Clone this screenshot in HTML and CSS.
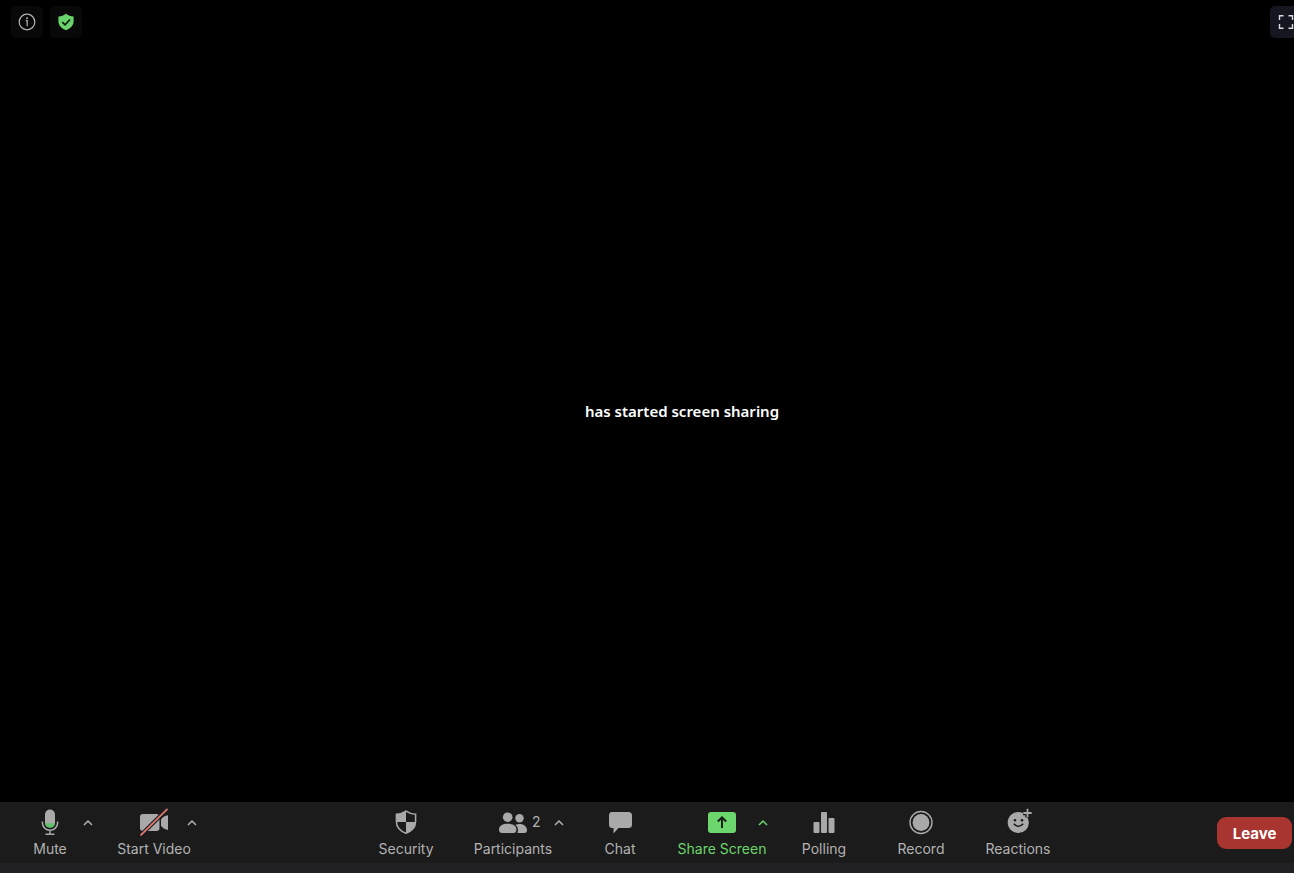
FILE: index.html
```html
<!DOCTYPE html>
<html lang="en">
<head>
<meta charset="utf-8">
<meta name="viewport" content="width=device-width, initial-scale=1">
<title>Meeting</title>
<link rel="stylesheet" href="styles.css">
</head>
<body>
<div class="meeting">
  <header class="topbar">
    <div class="topbar-group">
      <button class="chip" type="button" aria-label="Meeting information">
        <svg width="18" height="18" viewBox="0 0 18 18" fill="none" stroke="#b4b4b4" stroke-width="1.2"><circle cx="9" cy="9" r="7.8"/><path d="M7.800 7.600H9.200V13.200"/><circle cx="9" cy="5.200" r=".4" fill="#b4b4b4"/></svg>
      </button>
      <button class="chip" type="button" aria-label="Encryption">
        <svg width="18" height="18" viewBox="0 0 18 18"><path d="M9 .8C11 2.500 13.600 3.300 16.600 3.500V8.200C16.600 12.600 13.400 15.500 9 17.200C4.600 15.500 1.400 12.600 1.400 8.200V3.500C4.400 3.300 7 2.500 9 .8Z" fill="#6bd36b"/><path d="M5.200 9.200L8.100 11.800L13 6.500" fill="none" stroke="#0a1a0c" stroke-width="1.700"/></svg>
      </button>
    </div>
    <button class="chip chip-fullscreen" type="button" aria-label="Enter full screen">
      <svg width="16" height="16" viewBox="0 0 16 16" fill="none" stroke="#dcdce0" stroke-width="1.400"><path d="M1.500 6V1.700H5.500M10.500 1.700H14.500V6M14.500 10V14.300H10.500M5.500 14.300H1.500V10"/></svg>
    </button>
  </header>

  <main class="stage"><p class="status">has started screen sharing</p></main>

  <footer class="toolbar">
    <div class="tools tools-audio-video">
      <div class="tool">
        <button class="action" type="button">
          <span class="icon"><svg width="28" height="28" viewBox="0 0 28 28"><rect x="9" y="1.500" width="10" height="18" rx="5" fill="#a9a9a9"/><path d="M9 15.300H19A5 4.400 0 0 1 9 15.300Z" fill="#5fc069"/><path d="M6.400 13.500V15A7.600 7.200 0 0 0 21.600 15V13.500M14 22.300V26M9.500 26.200H18.500" fill="none" stroke="#a9a9a9" stroke-width="1.500"/></svg></span>
          <span class="label">Mute</span>
        </button>
        <button class="caret" type="button" aria-label="Audio options"><svg width="12" height="8" viewBox="0 0 12 8"><path d="M2 6L6 2L10 6"/></svg></button>
      </div>
      <div class="tool">
        <button class="action" type="button">
          <span class="icon"><svg width="30" height="28" viewBox="0 0 30 28"><rect x="1" y="6" width="19.500" height="17" rx="3" fill="#a9a9a9"/><path d="M22 11.500Q24 8 29 7.300V22Q24 21 22 17.500Z" fill="#a9a9a9"/><path d="M1.500 27.500L28.500 .8" stroke="#1b1b1b" stroke-width="4"/><path d="M1.500 27.500L28.500 .8" stroke="#dc7a70" stroke-width="1.800"/></svg></span>
          <span class="label">Start Video</span>
        </button>
        <button class="caret" type="button" aria-label="Video options"><svg width="12" height="8" viewBox="0 0 12 8"><path d="M2 6L6 2L10 6"/></svg></button>
      </div>
    </div>

    <div class="tools">
      <div class="tool tool-plain">
        <button class="action" type="button">
          <span class="icon"><svg width="28" height="28" viewBox="0 0 28 28"><path d="M14 3.200C16.600 5 20 6.100 23.600 6.300V13.500C23.600 19 19.500 23.200 14 25.200C8.500 23.200 4.400 19 4.400 13.500V6.300C8 6.100 11.400 5 14 3.200Z" fill="none" stroke="#a9a9a9" stroke-width="1.500"/><path d="M14 3.200V14H4.400V6.300C8 6.100 11.400 5 14 3.200ZM14 14H23.600C23.400 19 19.500 23.200 14 25.200Z" fill="#a9a9a9"/></svg></span>
          <span class="label">Security</span>
        </button>
      </div>
      <div class="tool tool-participants">
        <button class="action" type="button">
          <span class="icon"><svg width="28" height="28" viewBox="0 0 28 28"><g fill="#a9a9a9"><circle cx="8.700" cy="9.200" r="4.800"/><circle cx="20.500" cy="10.300" r="4.200"/><path d="M16.300 16.800C17.500 16.200 19 16 20.600 16C25 16 27.800 18.700 28 22Q28 25 25.500 25H18.500Q19.600 22 18.600 19.700Q17.800 17.800 16.300 16.800Z"/><path d="M0 21.500C0 17.700 3.800 15.800 8.700 15.800S17.400 17.700 17.400 21.500Q17.400 25 14.500 25H3Q0 25 0 21.500Z"/></g></svg><span class="count">2</span></span>
          <span class="label">Participants</span>
        </button>
        <button class="caret" type="button" aria-label="Participant options"><svg width="12" height="8" viewBox="0 0 12 8"><path d="M2 6L6 2L10 6"/></svg></button>
      </div>
      <div class="tool tool-plain">
        <button class="action" type="button">
          <span class="icon"><svg width="28" height="28" viewBox="0 0 28 28"><path d="M6 4H22.500Q26 4 26 7.500V16.500Q26 20 22.500 20H12.500L7.500 25.500V20H6Q3 20 3 16.500V7.500Q3 4 6 4Z" fill="#a9a9a9"/></svg></span>
          <span class="label">Chat</span>
        </button>
      </div>
      <div class="tool tool-share">
        <button class="action" type="button">
          <span class="icon"><svg width="28" height="28" viewBox="0 0 28 28"><rect x="0" y="4" width="28" height="21" rx="3" fill="#6bd66b"/><path d="M14 20V10.300M9.800 13.500L14 9.500L18.200 13.500" fill="none" stroke="#162018" stroke-width="2"/></svg></span>
          <span class="label">Share Screen</span>
        </button>
        <button class="caret" type="button" aria-label="Sharing options"><svg width="12" height="8" viewBox="0 0 12 8"><path d="M2 6L6 2L10 6"/></svg></button>
      </div>
      <div class="tool tool-plain">
        <button class="action" type="button">
          <span class="icon"><svg width="28" height="28" viewBox="0 0 28 28" fill="#a9a9a9"><rect x="3.500" y="14" width="6" height="11" rx="1"/><rect x="11" y="4" width="6" height="21" rx="1"/><rect x="18.500" y="10" width="6" height="15" rx="1"/></svg></span>
          <span class="label">Polling</span>
        </button>
      </div>
      <div class="tool tool-record">
        <button class="action" type="button">
          <span class="icon"><svg width="28" height="28" viewBox="0 0 28 28"><circle cx="14" cy="14.500" r="11" fill="none" stroke="#a9a9a9" stroke-width="1.400"/><circle cx="14" cy="14.500" r="8.400" fill="#a9a9a9"/></svg></span>
          <span class="label">Record</span>
        </button>
      </div>
      <div class="tool tool-plain">
        <button class="action" type="button">
          <span class="icon"><svg width="28" height="28" viewBox="0 0 28 28"><circle cx="14.300" cy="14.500" r="10.600" fill="#a9a9a9"/><circle cx="11" cy="12.300" r="1.300" fill="#1b1b1b"/><circle cx="18" cy="12.300" r="1.300" fill="#1b1b1b"/><path d="M9.800 15.800Q14.500 20.800 19.200 15.800" fill="none" stroke="#1b1b1b" stroke-width="1.600"/><path d="M23.500 .5V9.500M19 5H28" stroke="#1b1b1b" stroke-width="4.500"/><path d="M23.500 .8V9.200M19.300 5H27.700" stroke="#a9a9a9" stroke-width="1.800"/></svg></span>
          <span class="label">Reactions</span>
        </button>
      </div>
    </div>

    <button class="leave" type="button">Leave</button>
  </footer>
</div>
</body>
</html>
```

FILE: styles.css
```css
* {
  box-sizing: border-box;
}

body {
  margin: 0;
  background: #000;
  color: #b2b2b2;
  font-family: Inter, "Liberation Sans", sans-serif;
}

button {
  margin: 0;
  padding: 0;
  border: 0;
  background: none;
  color: inherit;
  font: inherit;
  cursor: pointer;
}

svg {
  display: block;
}

.meeting {
  display: flex;
  flex-direction: column;
  min-height: 100vh;
  overflow: hidden;
}

.topbar {
  display: flex;
  justify-content: space-between;
  padding: 6px 0 0 11px;
}

.topbar-group {
  display: flex;
  gap: 7px;
}

.chip {
  display: flex;
  align-items: center;
  justify-content: center;
  width: 32px;
  height: 32px;
  border-radius: 5px;
  background: #080808;
}

.chip-fullscreen {
  margin-right: -8px;
  background: #161620;
}

.stage {
  flex: 1;
  display: flex;
  align-items: center;
  justify-content: center;
  padding: 0 0 18px 70px;
}

.status {
  margin: 0;
  color: #fff;
  font: 600 15px/20px "Noto Sans", sans-serif;
}

.toolbar {
  display: flex;
  align-items: center;
  justify-content: space-between;
  padding: 6px 2px 5px 0;
  border-bottom: 10px solid #212125;
  background: #1b1b1b;
}

.tools {
  display: flex;
  gap: 12px;
}

.tools-audio-video {
  padding: 0 7px 0 4px;
}

.tool {
  position: relative;
  width: 92px;
}

.tool-plain {
  width: 82px;
}

.tool-record {
  width: 88px;
}

.tool-participants {
  width: 108px;
}

.tool-share {
  width: 98px;
  color: #6bd66b;
}

.action {
  display: flex;
  flex-direction: column;
  align-items: center;
  gap: 4px;
  width: 100%;
}

.icon {
  position: relative;
  height: 28px;
}

.count {
  position: absolute;
  top: 5px;
  left: 33px;
  font-size: 14px;
  line-height: 18px;
}

.label {
  font-size: 14px;
  line-height: 18px;
  white-space: nowrap;
}

.caret {
  position: absolute;
  top: 7px;
  right: 0;
  display: flex;
  align-items: center;
  justify-content: center;
  width: 16px;
  height: 16px;
}

.caret path {
  fill: none;
  stroke: currentColor;
  stroke-width: 1.5;
}

.leave {
  width: 75px;
  height: 32px;
  border-radius: 9px;
  background: #a83530;
  color: #fff;
  font-size: 15px;
  font-weight: 700;
}
```
